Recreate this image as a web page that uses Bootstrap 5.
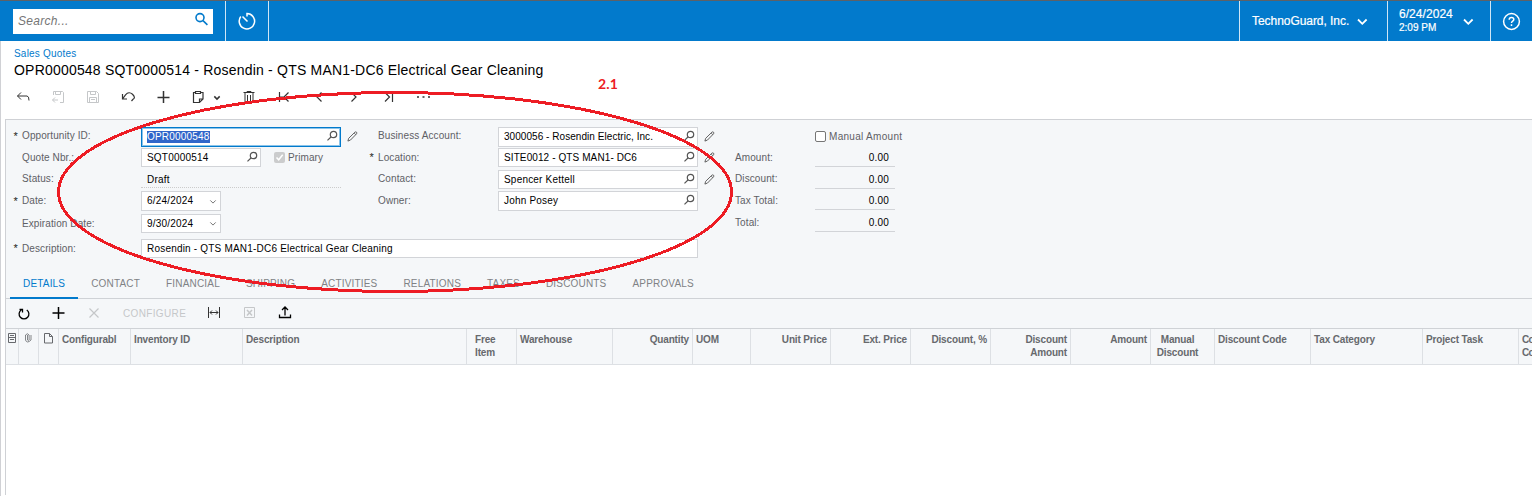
<!DOCTYPE html>
<html lang="en">
<head>
<meta charset="utf-8">
<title>Sales Quotes</title>
<link href="https://cdn.jsdelivr.net/npm/bootstrap@5.3.0/dist/css/bootstrap.min.css" rel="stylesheet">
<style>
body{font-family:"Liberation Sans",Arial,sans-serif;font-size:10px;letter-spacing:.2px;line-height:13px;color:#000;height:496px;overflow:hidden}
svg{display:block;fill:none;stroke:currentColor;flex:none}
.topbar{height:41px;background:#027acc;border-top:1px solid #5d6167;color:#fff}
.cell{border-left:1px solid #cfe6f6;height:40px}
.search{width:200px;height:25px;margin:0 12px 0 13px;background:#fff;color:#757575;font-size:12px;padding:0 4px 0 5px;letter-spacing:.3px}
.search svg{color:#027acc}
.page{border-left:1px solid #d0d1d5;height:455px}
.crumb{color:#027acc;line-height:14px;padding:6px 0 0 13px}
.ttl{font-size:14px;line-height:18px;padding:0 0 1px 13px;font-weight:400;letter-spacing:.2px}
.tools{height:33px;margin-bottom:6px;padding-left:15px}
.tools svg{margin-right:21px}
.off{color:#c5c7c9}
.panel{margin-left:4px;height:376px;border:solid #cfd1d5;border-width:1px 0 0 1px}
.shade{background:#f5f7f9}
.fields{display:grid;height:149px;padding-top:7px;grid-template-columns:16px 119px 200px 21px 16px 120px 200px 37px 80px 80px;grid-template-rows:21px 22px 21px 23px 25px 20px;align-items:start}
.lbl{color:#5e6065;line-height:17px;white-space:nowrap;letter-spacing:.1px}
.low{padding-top:1px}
.star{color:#222;text-align:right;padding-right:4px;line-height:18px;font-size:11px}
.box{height:20px;border:1px solid #d2d4d8;background:#fff;padding:0 2px 0 5px;line-height:17px;white-space:nowrap}
.box span{margin-top:-1px}
.box svg{color:#555;margin-top:-2px}
.box svg.arrow{margin:1px 1px 0 0;color:#777}
.focus{border:1px solid #027acc;box-shadow:inset 0 0 0 1px #8bc4ea}
.sel{background:#2f65ca;color:#fff;line-height:12px}
.pen{margin:4px 0 0 6px;color:#555}
.draft{height:18px;border-bottom:1px dotted #ccc;padding-left:6px;line-height:19px}
.amt{height:19px;border-bottom:1px solid #d2d4d8;text-align:right;padding-right:6px;line-height:20px}
.chk{width:11px;height:11px;border:1px solid #767676;border-radius:2px;background:#fff;flex:none;margin-right:3px}
.tabbar{height:30px;border-bottom:1px solid #cfd2d6;padding-left:4px;color:#808285}
.tabbar span{height:30px;line-height:29px;padding:0 13px;letter-spacing:.18px;white-space:nowrap}
.tabbar .cur{color:#027acc;border-bottom:2px solid #027acc}
.gridtools{height:30px;border-bottom:1px solid #cfd2d6}
.heads{height:36px;border-bottom:1px solid #dde0e4;color:#67696d;font-weight:700;letter-spacing:-.15px;overflow:hidden}
.heads>div{flex:none;border-right:1px solid #dde0e4;padding:4px 3px 0 3px;white-space:nowrap;overflow:hidden}
.mark-ring{left:0;top:0;color:#ed1c24;pointer-events:none}
.note{left:598px;top:75px;font:700 14px/17px Lato,sans-serif;color:#ed1c24;letter-spacing:.2px}
</style>
<script src="https://cdn.jsdelivr.net/npm/bootstrap@5.3.0/dist/js/bootstrap.bundle.min.js"></script>
</head>
<body class="position-relative">
<svg class="d-none">
<symbol id="mag" viewBox="0 0 12 12"><circle cx="7.5" cy="4.500" r="3.200" stroke-width="1.200"/><path d="M5.200 6.800 1.500 10.400" stroke-width="1.200"/></symbol>
<symbol id="pen" viewBox="0 0 12 12"><path d="m1 11 .8-3L8.600 1.300q1-.8 1.800 0t0 1.800L3.800 9.900zM7.800 2.200l1.700 1.700"/></symbol>
<symbol id="chev" viewBox="0 0 8 6"><path d="m1.300 1.400 2.700 2.700 2.700-2.700"/></symbol>
</svg>
<header class="topbar d-flex align-items-center">
 <div class="search d-flex align-items-center justify-content-between"><i>Search...</i><svg width="14" height="14" style="margin-top:-5px" stroke-width="1.600"><circle cx="5" cy="5.600" r="4"/><path d="m8 8.600 4.400 4.200"/></svg></div>
 <div class="cell d-flex align-items-center" style="width:43px;padding-left:11px"><svg width="20" height="20" stroke-width="1.500"><path d="M10 5.500V2.500a7.700 7.700 0 1 1-6.200 3M5.500 5.500l5 5"/></svg></div>
 <div class="cell flex-grow-1"></div>
 <div class="cell d-flex align-items-center" style="width:148px;padding-left:12px;font-size:12px"><span style="width:105px;letter-spacing:-.05px;-webkit-text-stroke:.2px">TechnoGuard, Inc.</span><svg width="11" height="8" style="margin-top:2px" stroke-width="1.800"><path d="m1 1.500 4.300 4.300 4.300-4.300"/></svg></div>
 <div class="cell d-flex align-items-center" style="width:103px;padding-left:11px"><div style="width:64px;-webkit-text-stroke:.2px"><div style="font-size:12px;line-height:14px;margin-top:-1px;letter-spacing:.05px">6/24/2024</div><div style="line-height:14px;letter-spacing:0">2:09 PM</div></div><svg width="11" height="8" style="margin-top:2px" stroke-width="1.800"><path d="m1 1.500 4.300 4.300 4.300-4.300"/></svg></div>
 <div class="cell d-flex align-items-center" style="width:42px;padding-left:11px"><svg width="19" height="19" stroke-width="1.500"><circle cx="9.500" cy="9.500" r="7.900"/><path d="M7.200 7.700c0-3 4.600-2.800 4.600-.2 0 1.600-2.300 1.700-2.300 3.400M9.500 12.200v1.700"/></svg></div>
</header>
<main class="page">
 <div class="crumb">Sales Quotes</div>
 <h1 class="ttl m-0">OPR0000548 SQT0000514 - Rosendin - QTS MAN1-DC6 Electrical Gear Cleaning</h1>
 <div class="tools d-flex align-items-center" style="color:#333">
  <svg width="14" height="14"><path d="M5 2.500 1.500 6 5 9.500M1.500 6H11q2 0 2 4.500"/></svg>
  <svg class="off" width="14" height="14"><path d="M2.500 5V1.500h9l1 1v10H9M4.500 1.500v3h5v-3M4 7.500 1.500 10 4 12.500M1.500 10h5.500"/></svg>
  <svg class="off" width="14" height="14"><path d="M1.500 1.500h9l2 2v9h-11zM4.500 1.500v3h5v-3M3.500 12.500v-5h7v5M5 9.500h4"/></svg>
  <svg width="14" height="14" stroke-width="1.200"><path d="M1.500 4v5H6M1.500 9 4.500 4.800Q8 1 11.500 4.300t.5 5l-1.500 1.700"/></svg>
  <svg width="14" height="14" stroke-width="1.500"><path d="M7.500 1v12M1.500 7.500h12"/></svg>
  <svg style="margin-right:8px" width="14" height="14" stroke-width="1.200"><path d="M4 2.500H2.500v10h6l3.500-3.500v-6.500h-2M4.500 3.500V1.500h5v2zM8.500 12.500V9H12"/></svg>
  <svg style="margin:3px 21px 0 0" width="8" height="6" stroke-width="1.500"><use href="#chev"/></svg>
  <svg width="14" height="14"><path d="M1.500 2.500h11M5 2.500V1.500h4v1M3 2.500v10h8v-10M5.500 5v6M8.500 5v6"/></svg>
  <svg width="14" height="14" stroke-width="1.200"><path d="M2.500 2v10M11.500 2.500 7 7l4.500 4.500M3 7H7"/></svg>
  <svg width="14" height="14" stroke-width="1.200"><path d="M9.500 2.500 5 7l4.500 4.500"/></svg>
  <svg width="14" height="14" stroke-width="1.200"><path d="M4.500 2.500 9 7l-4.500 4.500"/></svg>
  <svg width="14" height="14" stroke-width="1.200"><path d="M3 2.500 7.500 7 3 11.500M10.500 2v10"/></svg>
  <svg width="14" height="14" stroke-width="1.500"><path d="M0 7h2M5.500 7h2M11 7h2"/></svg>
 </div>
 <section class="panel">
  <div class="fields shade">
   <div class="star">*</div><div class="lbl">Opportunity ID:</div><div class="box focus d-flex align-items-center justify-content-between"><span class="sel">OPR0000548</span><svg width="12" height="12"><use href="#mag"/></svg></div><svg class="pen" width="11" height="11"><use href="#pen"/></svg>
   <div></div><div class="lbl">Business Account:</div><div class="box d-flex align-items-center justify-content-between"><span style="letter-spacing:.05px">3000056 - Rosendin Electric, Inc.</span><svg width="12" height="12"><use href="#mag"/></svg></div><svg class="pen" width="11" height="11"><use href="#pen"/></svg>
   <div></div><div class="lbl d-flex align-items-center" style="height:19px;letter-spacing:.3px"><i class="chk"></i>Manual Amount</div>

   <div></div><div class="lbl low">Quote Nbr.:</div><div class="d-flex align-items-center"><div class="box d-flex align-items-center justify-content-between" style="width:120px;height:19px"><span>SQT0000514</span><svg width="12" height="12"><use href="#mag"/></svg></div><svg style="margin:0 3px 0 13px" width="11" height="11"><rect width="11" height="11" rx="2" fill="#cbcccd" stroke="none"/><path d="m2.500 5.500 2.200 2.300 4-5" stroke="#fff" stroke-width="1.500"/></svg><span class="lbl">Primary</span></div><div></div>
   <div class="star">*</div><div class="lbl low">Location:</div><div class="box d-flex align-items-center justify-content-between" style="height:19px"><span style="letter-spacing:.1px">SITE0012 - QTS MAN1- DC6</span><svg width="12" height="12"><use href="#mag"/></svg></div><svg class="pen" width="11" height="11"><use href="#pen"/></svg>
   <div class="lbl low">Amount:</div><div class="amt">0.00</div>

   <div></div><div class="lbl">Status:</div><div class="draft">Draft</div><div></div>
   <div></div><div class="lbl">Contact:</div><div class="box d-flex align-items-center justify-content-between" style="height:19px"><span>Spencer Kettell</span><svg width="12" height="12"><use href="#mag"/></svg></div><svg class="pen" width="11" height="11"><use href="#pen"/></svg>
   <div class="lbl">Discount:</div><div class="amt">0.00</div>

   <div class="star low">*</div><div class="lbl low">Date:</div><div class="box d-flex align-items-center justify-content-between" style="width:80px"><span>6/24/2024</span><svg class="arrow" width="8" height="6"><use href="#chev"/></svg></div><div></div>
   <div></div><div class="lbl low">Owner:</div><div class="box d-flex align-items-center justify-content-between"><span>John Posey</span><svg width="12" height="12"><use href="#mag"/></svg></div><div></div>
   <div class="lbl low">Tax Total:</div><div class="amt">0.00</div>

   <div></div><div class="lbl low">Expiration Date:</div><div class="box d-flex align-items-center justify-content-between" style="width:80px;height:19px"><span>9/30/2024</span><svg class="arrow" width="8" height="6"><use href="#chev"/></svg></div><div></div>
   <div></div><div></div><div></div><div></div><div class="lbl">Total:</div><div class="amt" style="height:18px;line-height:17px">0.00</div>

   <div class="star">*</div><div class="lbl low">Description:</div><div class="box" style="grid-column:span 5;height:19px">Rosendin - QTS MAN1-DC6 Electrical Gear Cleaning</div>
  </div>
  <div class="tabbar shade d-flex"><span class="cur">DETAILS</span><span>CONTACT</span><span>FINANCIAL</span><span>SHIPPING</span><span>ACTIVITIES</span><span>RELATIONS</span><span>TAXES</span><span>DISCOUNTS</span><span>APPROVALS</span></div>
  <div class="gridtools shade d-flex align-items-center" style="padding-left:11px">
   <svg width="14" height="14" stroke-width="1.300"><path d="M4.200 3a4.900 4.900 0 1 0 5.600 0M2.500 2.500h3v3"/></svg>
   <svg style="margin-left:20px;margin-top:-2px" width="14" height="14" stroke-width="1.500"><path d="M7.500 1v12M1.500 7h12"/></svg>
   <svg class="off" style="margin-left:23px;margin-top:-2px" width="12" height="12" stroke-width="1.200"><path d="m1.500 1.500 9 9M10.500 1.500l-9 9"/></svg>
   <span class="off" style="margin-left:23px;letter-spacing:.35px;width:84px;line-height:12px">CONFIGURE</span>
   <svg width="14" height="14" style="color:#333;margin-top:-2px"><path d="M1.500 1v11M12.500 1v11M3 6.500h8M5 4.500l-2 2 2 2M9 4.500l2 2-2 2"/></svg>
   <svg class="off" style="margin-left:22px;margin-top:-1px" width="14" height="14"><path d="M1.500 1.500h10v10h-10z"/><path d="m4 4 5 5.500M9 4 4 9.500" stroke-width="1.500"/></svg>
   <svg style="margin-left:21px;margin-top:-3px" width="14" height="14" stroke-width="1.300"><path d="M1.500 9.500v3h11v-3M7 10.500V2M4 5l3-3 3 3"/></svg>
  </div>
  <div class="heads shade d-flex">
   <div style="width:13px;padding:3px 0 0 1px"><svg width="10" height="12"><path d="M1.500 1.500h7v9h-7zM1.500 5.500h7M3 3.500h4M3 7.500h4"/></svg></div>
   <div style="width:20px;padding:3px 0 0 5px"><svg width="9" height="12" stroke-width=".8"><path d="M3.500 3v5q.8 1.500 1.600 0V3Q3.500.5 1.500 3v5q1.500 4 5.500 0V3"/></svg></div>
   <div style="width:20px;padding:3px 0 0 5px"><svg width="11" height="13"><path d="M.5 1.500h5l3 3v6.500h-8zM5.500 1.500v3h3"/></svg></div>
   <div style="width:72px">Configurabl</div><div style="width:112px">Inventory ID</div><div style="width:224px">Description</div>
   <div style="width:50px;padding-left:8px">Free<br>Item</div><div style="width:96px">Warehouse</div><div class="text-end" style="width:80px">Quantity</div><div style="width:58px">UOM</div>
   <div class="text-end" style="width:80px">Unit Price</div><div class="text-end" style="width:80px">Ext. Price</div><div class="text-end" style="width:80px">Discount, %</div><div class="text-end" style="width:80px">Discount<br>Amount</div><div class="text-end" style="width:80px">Amount</div>
   <div class="text-center" style="width:64px;padding-right:13px">Manual<br>Discount</div><div style="width:96px">Discount Code</div><div style="width:112px">Tax Category</div><div style="width:96px">Project Task</div><div style="width:13px;padding-right:0;border:0;letter-spacing:-.6px">Co<br>Co</div>
  </div>
 </section>
</main>
<svg class="mark-ring position-absolute" width="760" height="310" stroke-width="3" shape-rendering="crispEdges"><ellipse cx="395" cy="192" rx="336.500" ry="99.500"/></svg>
<div class="note position-absolute">2.1</div>
</body>
</html>
